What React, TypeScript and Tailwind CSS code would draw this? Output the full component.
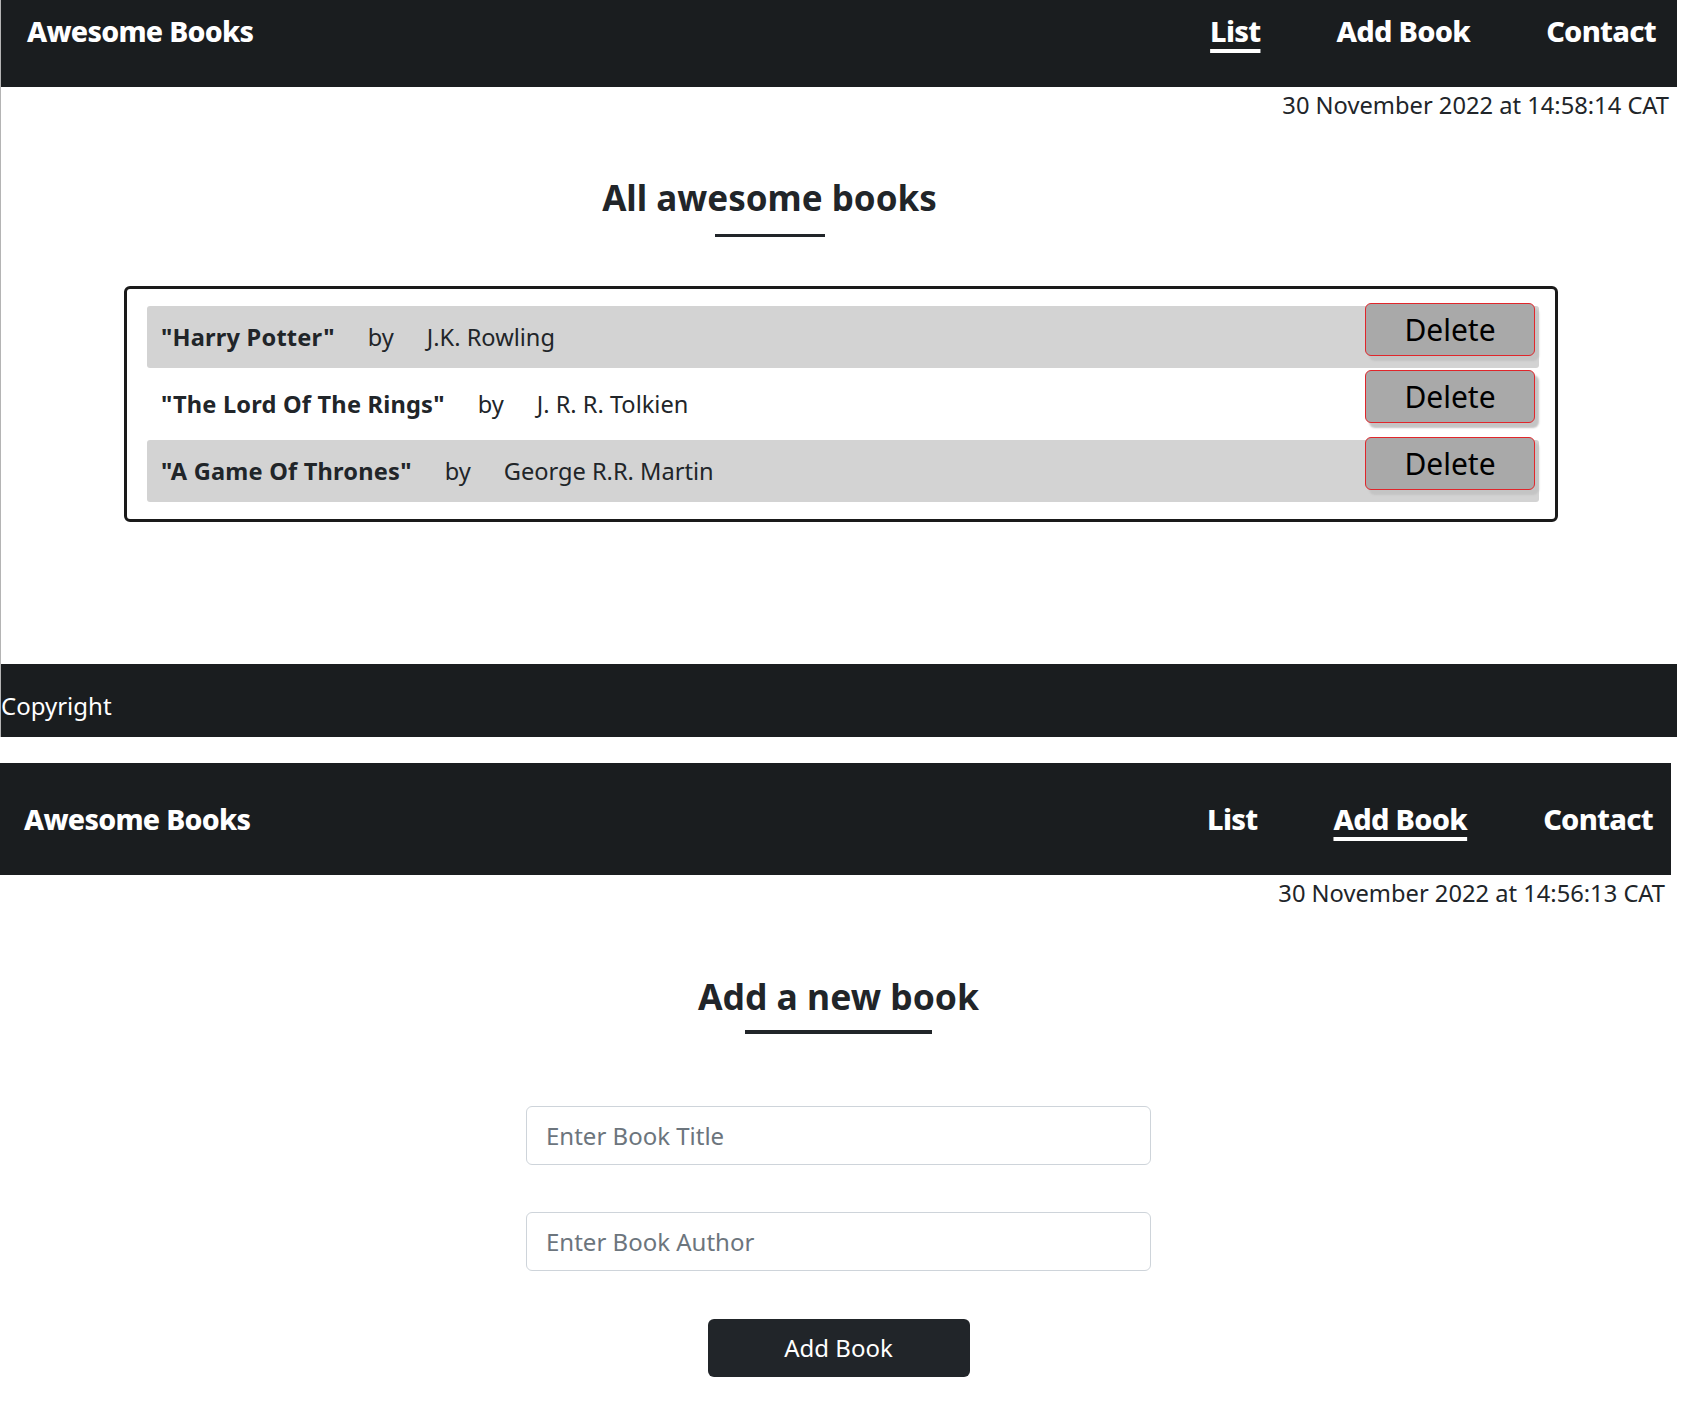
const books = [
  { title: "Harry Potter", author: "J.K. Rowling" },
  { title: "The Lord Of The Rings", author: "J. R. R. Tolkien" },
  { title: "A Game Of Thrones", author: "George R.R. Martin" },
];

const font = { fontFamily: '"Noto Sans", "Open Sans", sans-serif' };

function NavBar({ active, tall }: { active: string; tall?: boolean }) {
  const links = ["List", "Add Book", "Contact"];
  return (
    <nav
      className={`flex justify-between bg-[#1a1d1f] text-white ${
        tall ? "h-[112px] items-center pl-[24px] pr-[18px]" : "h-[87px] items-start pt-[13px] pl-[26px] pr-[21px]"
      }`}
    >
      <span className="text-[28.5px] leading-[36px] font-extrabold tracking-tight">Awesome Books</span>
      <ul className="flex gap-[76px]">
        {links.map((l) => (
          <li
            key={l}
            className={`text-[29px] leading-[36px] font-extrabold tracking-tight ${
              l === active ? "underline decoration-4 underline-offset-[7px]" : ""
            }`}
          >
            {l}
          </li>
        ))}
      </ul>
    </nav>
  );
}

function DateLine({ text, pr }: { text: string; pr: string }) {
  return <p className={`text-right text-[23.7px] leading-[36px] text-[#212529] ${pr}`}>{text}</p>;
}

function ListView() {
  return (
    <div className="w-[1677px] border-l border-[#b4b4b4]">
      <NavBar active="List" />
      <DateLine text="30 November 2022 at 14:58:14 CAT" pr="pr-[8px]" />

      {/* title sits a bit left of centre in the original */}
      <div className="flex flex-col items-center pr-[139px] mt-[53px]">
        <h2 className="text-[35px] leading-[43px] font-bold text-[#212529]">All awesome books</h2>
        <div className="mt-[15px] h-[3px] w-[110px] bg-[#212529]"></div>
      </div>

      <div className="ml-[123px] mt-[49px] w-[1434px] h-[236px] border-[3px] border-[#1a1a1a] rounded-md pt-[17px] pl-[20px] pr-[16px] flex flex-col gap-[5px]">
        {books.map((b, i) => (
          <div
            key={b.title}
            className={`flex items-start justify-between h-[62px] pl-[14px] pr-[4px] rounded-[3px] ${
              i % 2 === 0 ? "bg-[#d3d3d3]" : "bg-white"
            }`}
          >
            <div className="flex items-center gap-[33px] h-[64px] text-[23.6px] text-[#212529]">
              <span className="font-bold tracking-[0.2px]">"{b.title}"</span>
              <span>by</span>
              <span>{b.author}</span>
            </div>
            <button className="-mt-[3px] w-[170px] h-[53px] bg-[#a9a9a9] border border-[#e0262b] rounded-[6px] text-[30px] text-black shadow-[4px_5px_2px_#c4c4c4]">
              Delete
            </button>
          </div>
        ))}
      </div>

      <footer className="mt-[142px] h-[73px] bg-[#1a1d1f] text-white flex items-center pt-[10px]">
        <span className="text-[24px]">Copyright</span>
      </footer>
    </div>
  );
}

function AddView() {
  return (
    <div className="w-[1671px] mt-[26px]">
      <NavBar active="Add Book" tall />
      <DateLine text="30 November 2022 at 14:56:13 CAT" pr="pr-[6px]" />

      <div className="flex flex-col items-center pl-[6px] mt-[64px]">
        <h2 className="text-[35.5px] leading-[43px] font-bold text-[#212529]">Add a new book</h2>
        <div className="mt-[12px] h-[4px] w-[187px] bg-[#212529]"></div>

        <input
          className="mt-[72px] w-[625px] h-[59px] border border-[#ced4da] rounded-md px-[19px] text-[24px] placeholder:text-[#6c757d] outline-none"
          placeholder="Enter Book Title"
        />
        <input
          className="mt-[47px] w-[625px] h-[59px] border border-[#ced4da] rounded-md px-[19px] text-[24px] placeholder:text-[#6c757d] outline-none"
          placeholder="Enter Book Author"
        />
        <button className="mt-[48px] w-[262px] h-[58px] bg-[#212529] rounded-md text-white text-[24px]">
          Add Book
        </button>
      </div>
    </div>
  );
}

export default function App() {
  return (
    <div className="w-[1688px] h-[1414px] bg-white overflow-hidden" style={font}>
      <ListView />
      <AddView />
    </div>
  );
}
